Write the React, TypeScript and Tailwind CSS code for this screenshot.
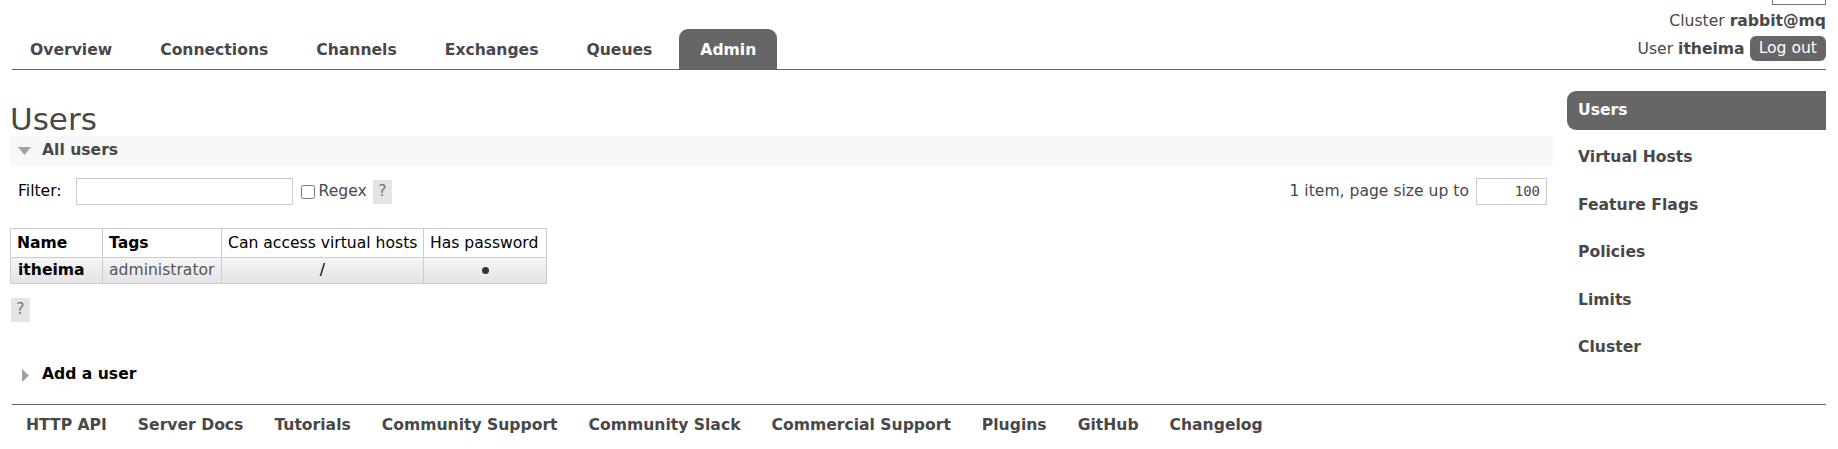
// RabbitMQ management — Admin / Users page.

const TABS = ["Overview", "Connections", "Channels", "Exchanges", "Queues", "Admin"];
const SIDE = ["Users", "Virtual Hosts", "Feature Flags", "Policies", "Limits", "Cluster"];
const FOOT = ["HTTP API", "Server Docs", "Tutorials", "Community Support", "Community Slack", "Commercial Support", "Plugins", "GitHub", "Changelog"];

function Help({ className = "" }: { className?: string }) {
  return (
    <span className={`inline-flex items-center justify-center w-[19px] h-[24px] bg-[#e4e4e4] text-[#777] ${className}`}>?</span>
  );
}

export default function App() {
  return (
    <div className="w-[1838px] h-[449px] overflow-hidden bg-white text-[15.6px] text-[#484848] font-['DejaVu_Sans',Verdana,sans-serif]">
      {/* header: tabs + cluster/user */}
      <div className="mx-[12px] h-[70px] flex justify-between border-b border-[#666]">
        <ul className="flex self-end -ml-[3px] gap-[6px]">
          {TABS.map((t) => (
            <li key={t}
              className={`h-[40px] px-[21px] pt-[3px] leading-[37px] font-bold rounded-t-[9px] ${t === "Admin" ? "bg-[#666] text-white" : ""}`}>
              {t}
            </li>
          ))}
        </ul>
        <div className="flex flex-col items-end">
          <div className="w-[54px] h-[5px] border border-t-0 border-[#767676]" />
          <div className="mt-[6px] leading-[20px]">Cluster <b>rabbit@mq</b></div>
          <div className="mt-[5px] flex items-center leading-[20px]">
            <span>User <b>itheima</b></span>
            <span className="ml-[5px] h-[25px] px-[9px] rounded-[6px] bg-[#666] text-white leading-[25px]">Log out</span>
          </div>
        </div>
      </div>

      {/* main */}
      <div className="h-[334px] flex pl-[10px] pr-[12px] gap-[14px]">
        <div className="flex-1 pt-[33px]">
          <h1 className="text-[31px] leading-[32px]">Users</h1>

          <div className="mt-[1px] h-[30px] flex items-center bg-[#f8f8f8] pl-[8px]">
            <svg width="13" height="8" viewBox="0 0 13 8"><polygon points="0,0 13,0 6.5,8" fill="#a0a0a0" /></svg>
            <span className="ml-[11px] font-bold">All users</span>
          </div>

          <div className="mt-[12px] h-[27px] flex items-center justify-between pr-[6px]">
            <div className="flex items-center pl-[8px]">
              <span className="text-black">Filter:</span>
              <span className="ml-[14px] w-[217px] h-[27px] border border-[#ccc] bg-white" />
              <input type="checkbox" className="ml-[8px] w-[14px] h-[14px]" />
              <span className="ml-[4px]">Regex</span>
              <Help className="ml-[6px]" />
            </div>
            <div className="flex items-center">
              <span>1 item, page size up to</span>
              <span className="ml-[7px] w-[71px] h-[27px] border border-[#ccc] bg-white text-right pr-[6px] leading-[25px] text-[14px] font-['DejaVu_Sans_Mono',monospace]">100</span>
            </div>
          </div>

          <table className="mt-[23px] w-[536px] table-fixed border-collapse text-black">
            <thead>
              <tr className="h-[29px]">
                <th className="w-[92px] border border-[#ccc] px-[6px] pt-[2px] text-left font-bold">Name</th>
                <th className="w-[119px] border border-[#ccc] px-[6px] pt-[2px] text-left font-bold">Tags</th>
                <th className="w-[202px] border border-[#ccc] px-[6px] pt-[2px] text-left font-normal whitespace-nowrap">Can access virtual hosts</th>
                <th className="w-[123px] border border-[#ccc] px-[6px] pt-[2px] text-left font-normal whitespace-nowrap">Has password</th>
              </tr>
            </thead>
            <tbody>
              <tr className="h-[26px] bg-gradient-to-b from-[#f5f5f5] to-[#e3e3e3]">
                <td className="border border-[#ccc] px-[7px] font-bold">itheima</td>
                <td className="border border-[#ccc] px-[6px] text-[#555] whitespace-nowrap">administrator</td>
                <td className="border border-[#ccc] text-center">/</td>
                <td className="border border-[#ccc] text-center text-[#333]">
                  <span className="inline-block w-[7px] h-[7px] rounded-full bg-[#333] align-middle" />
                </td>
              </tr>
            </tbody>
          </table>

          <Help className="mt-[14px] h-[23px] ml-[1px]" />

          <div className="mt-[43px] h-[20px] flex items-center pl-[12px]">
            <svg width="7" height="13" viewBox="0 0 7 13"><polygon points="0,0 7,6.5 0,13" fill="#a0a0a0" /></svg>
            <span className="ml-[13px] font-bold text-black">Add a user</span>
          </div>
        </div>

        <ul className="w-[259px] pt-[21px] flex flex-col gap-[8.4px]">
          {SIDE.map((s) => (
            <li key={s}
              className={`h-[39px] leading-[39px] pl-[11px] font-bold ${s === "Users" ? "bg-[#666] text-white rounded-l-[9px]" : ""}`}>
              {s}
            </li>
          ))}
        </ul>
      </div>

      {/* footer */}
      <div className="mx-[12px] border-t border-[#666] pt-[10px] pl-[14px] flex gap-[31px] font-bold leading-[20px]">
        {FOOT.map((f) => <span key={f}>{f}</span>)}
      </div>
    </div>
  );
}
